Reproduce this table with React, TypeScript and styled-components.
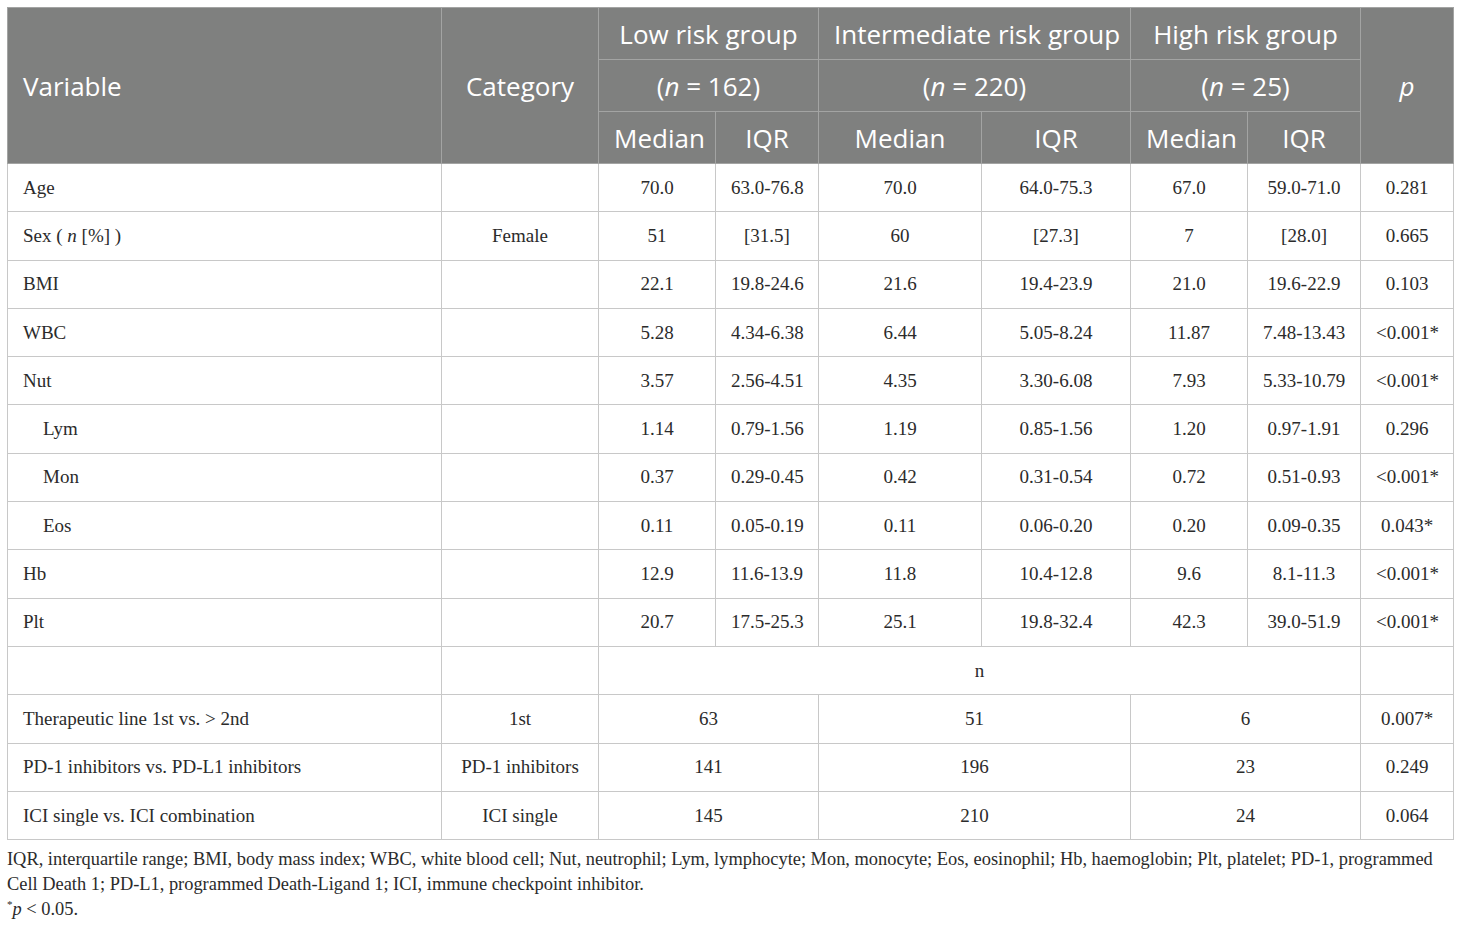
import styled, { createGlobalStyle } from "styled-components";

const GlobalStyle = createGlobalStyle`
  html, body {
    margin: 0;
    padding: 0;
    background: #ffffff;
  }
`;

type Row = {
  variable: string;
  sub?: boolean;
  category?: string;
  values: string[];
  p: string;
};

const numericRows: Row[] = [
  { variable: "Age", values: ["70.0", "63.0-76.8", "70.0", "64.0-75.3", "67.0", "59.0-71.0"], p: "0.281" },
  { variable: "Sex", category: "Female", values: ["51", "[31.5]", "60", "[27.3]", "7", "[28.0]"], p: "0.665" },
  { variable: "BMI", values: ["22.1", "19.8-24.6", "21.6", "19.4-23.9", "21.0", "19.6-22.9"], p: "0.103" },
  { variable: "WBC", values: ["5.28", "4.34-6.38", "6.44", "5.05-8.24", "11.87", "7.48-13.43"], p: "<0.001*" },
  { variable: "Nut", values: ["3.57", "2.56-4.51", "4.35", "3.30-6.08", "7.93", "5.33-10.79"], p: "<0.001*" },
  { variable: "Lym", sub: true, values: ["1.14", "0.79-1.56", "1.19", "0.85-1.56", "1.20", "0.97-1.91"], p: "0.296" },
  { variable: "Mon", sub: true, values: ["0.37", "0.29-0.45", "0.42", "0.31-0.54", "0.72", "0.51-0.93"], p: "<0.001*" },
  { variable: "Eos", sub: true, values: ["0.11", "0.05-0.19", "0.11", "0.06-0.20", "0.20", "0.09-0.35"], p: "0.043*" },
  { variable: "Hb", values: ["12.9", "11.6-13.9", "11.8", "10.4-12.8", "9.6", "8.1-11.3"], p: "<0.001*" },
  { variable: "Plt", values: ["20.7", "17.5-25.3", "25.1", "19.8-32.4", "42.3", "39.0-51.9"], p: "<0.001*" },
];

const countRows: Row[] = [
  { variable: "Therapeutic line 1st vs. > 2nd", category: "1st", values: ["63", "51", "6"], p: "0.007*" },
  { variable: "PD-1 inhibitors vs. PD-L1 inhibitors", category: "PD-1 inhibitors", values: ["141", "196", "23"], p: "0.249" },
  { variable: "ICI single vs. ICI combination", category: "ICI single", values: ["145", "210", "24"], p: "0.064" },
];

const colWidths = [434, 157, 117, 103, 163, 149, 117, 113, 93];

const App = () => {
  return (
    <Page>
      <GlobalStyle />
      <Table>
        <colgroup>
          {colWidths.map((w, i) => (
            <col key={i} style={{ width: w }} />
          ))}
        </colgroup>
        <thead>
          <tr>
            <HeadCell rowSpan={3} $align="left">Variable</HeadCell>
            <HeadCell rowSpan={3}>Category</HeadCell>
            <HeadCell colSpan={2}>Low risk group</HeadCell>
            <HeadCell colSpan={2}>Intermediate risk group</HeadCell>
            <HeadCell colSpan={2}>High risk group</HeadCell>
            <HeadCell rowSpan={3}>
              <i>p</i>
            </HeadCell>
          </tr>
          <tr>
            <HeadCell colSpan={2}>
              (<i>n</i> = 162)
            </HeadCell>
            <HeadCell colSpan={2}>
              (<i>n</i> = 220)
            </HeadCell>
            <HeadCell colSpan={2}>
              (<i>n</i> = 25)
            </HeadCell>
          </tr>
          <tr>
            <HeadCell>Median</HeadCell>
            <HeadCell>IQR</HeadCell>
            <HeadCell>Median</HeadCell>
            <HeadCell>IQR</HeadCell>
            <HeadCell>Median</HeadCell>
            <HeadCell>IQR</HeadCell>
          </tr>
        </thead>
        <tbody>
          {numericRows.map((row) => (
            <tr key={row.variable}>
              <Cell $align="left" $indent={row.sub}>
                {row.variable === "Sex" ? (
                  <>
                    Sex ( <i>n</i> [%] )
                  </>
                ) : (
                  row.variable
                )}
              </Cell>
              <Cell>{row.category}</Cell>
              {row.values.map((v, i) => (
                <Cell key={i}>{v}</Cell>
              ))}
              <Cell>{row.p}</Cell>
            </tr>
          ))}
          <tr>
            <Cell />
            <Cell />
            <Cell colSpan={6}>n</Cell>
            <Cell />
          </tr>
          {countRows.map((row) => (
            <tr key={row.variable}>
              <Cell $align="left">{row.variable}</Cell>
              <Cell>{row.category}</Cell>
              {row.values.map((v, i) => (
                <Cell key={i} colSpan={2}>
                  {v}
                </Cell>
              ))}
              <Cell>{row.p}</Cell>
            </tr>
          ))}
        </tbody>
      </Table>
      <Notes>
        <p>
          IQR, interquartile range; BMI, body mass index; WBC, white blood cell; Nut, neutrophil; Lym, lymphocyte; Mon,
          monocyte; Eos, eosinophil; Hb, haemoglobin; Plt, platelet; PD-1, programmed Cell Death 1; PD-L1, programmed
          Death-Ligand 1; ICI, immune checkpoint inhibitor.
        </p>
        <p>
          <sup>*</sup>
          <i>p</i> &lt; 0.05.
        </p>
      </Notes>
    </Page>
  );
};
export default App;

const Page = styled.div`
  padding: 7px;
  width: 1446px;
`;

const Table = styled.table`
  border-collapse: collapse;
  table-layout: fixed;
  width: 1446px;
`;

const HeadCell = styled.th<{ $align?: "left" | "center" }>`
  background: #7f807f;
  color: #ffffff;
  font-family: "Open Sans", "Noto Sans", sans-serif;
  font-weight: 400;
  font-size: 26px;
  height: 51px;
  padding: 0 15px;
  text-align: ${(p) => p.$align ?? "center"};
  vertical-align: middle;
  border: 1px solid #a3a4a3;
  white-space: nowrap;
  i {
    font-style: italic;
  }
`;

const Cell = styled.td<{ $align?: "left" | "center"; $indent?: boolean }>`
  font-family: "Liberation Serif", "Times New Roman", serif;
  font-size: 19px;
  color: #2b2b2b;
  height: 47.3px;
  padding: 0 15px;
  padding-left: ${(p) => (p.$indent ? "35px" : "15px")};
  text-align: ${(p) => p.$align ?? "center"};
  vertical-align: middle;
  border: 1px solid #c8c8c8;
  white-space: nowrap;
`;

const Notes = styled.div`
  font-family: "Liberation Serif", "Times New Roman", serif;
  font-size: 18.4px;
  color: #2b2b2b;
  line-height: 25px;
  margin-top: 7px;
  p {
    margin: 0;
  }
  sup {
    font-size: 11px;
    line-height: 0;
  }
`;
